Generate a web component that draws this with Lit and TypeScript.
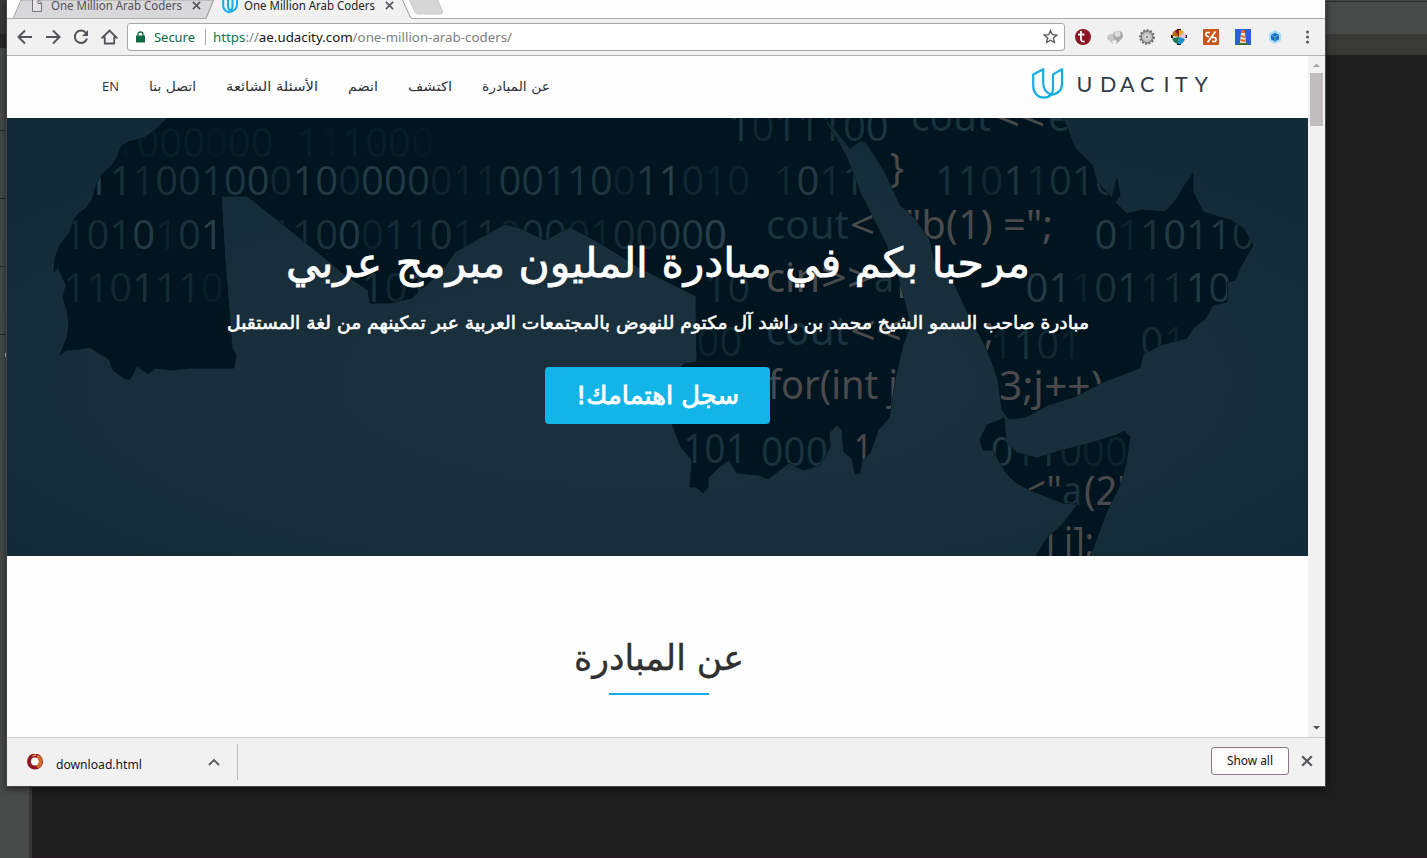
import { LitElement, html, svg, css } from "lit";
import { customElement } from "lit/decorators.js";

// A single line of text fitted to an exact advance width.
const line = (text: string, w: number, h: number, base: number, cls: string) => html`
  <svg class="line ${cls}" width=${w} height=${h} viewBox="0 0 ${w} ${h}">
    <text x=${w / 2} y=${base} text-anchor="middle" textLength=${w} lengthAdjust="spacingAndGlyphs">${text}</text>
  </svg>`;

// Binary digits: [first centre x, baseline, digits, brightness 0-9 per digit]
const PITCH = 22.88;
const ROWS: [number, number, string, string][] = [
  [125, 157, "1000000 111000", "01110110101110"],
  [98, 195, "11100100010000001100110011010", "85355567377377622266566268322"],
  [785, 195, "1011", "3735"],
  [946, 195, "11011010", "55363555"],
  [75, 249, "1010101  11000110110000100000", "34472580034572435242552244777"],
  [715, 249, "0", "5"],
  [1106, 249, "0110110", "7257665"],
  [75, 302, "1101110", "3335431"],
  [373, 302, "101", "535"],
  [716, 302, "10", "44"],
  [1037, 302, "011011110", "772563476"],
  [708, 356, "00", "23"],
  [1002, 359, "1101", "2532"],
  [1152, 356, "01", "42"],
  [740, 141, "1011100", "6355556"],
  [1002, 466, "011000", "745322"],
];

// Code fragments: [x, baseline, text, width, grey?]
const CODE: [number, number, string, number, boolean][] = [
  [911, 131, "cout", 80, false],
  [995, 131, "<<", 50, true],
  [1048, 131, "e", 22, false],
  [766, 239, "cout", 83, false],
  [850, 239, "<", 25, true],
  [766, 292, "cin", 54, true],
  [821, 292, ">>", 52, true],
  [874, 292, "a", 20, false],
  [897, 292, "[", 12, true],
  [766, 345, "cout", 83, false],
  [850, 345, "<<", 52, true],
  [890, 182, "}", 14, true],
  [905, 239, "\"b(1) =\";", 148, true],
  [768, 399, "for(int j", 130, true],
  [999, 400, "3;j++)", 104, true],
  [984, 345, ";", 10, true],
  [683, 463, "101", 64, false],
  [761, 466, "000", 67, false],
  [854, 463, "1", 18, true],
  [1024, 505, "<\"", 38, true],
  [1062, 505, "a", 20, false],
  [1084, 505, "(2'", 42, true],
  [1046, 556, "j i];", 48, true],
];

const LAND = [
  "168,118 155,130 144,138 128,142 121,147 117,158 111,167 102,174 97,183 92,200 86,208 77,215 74,220 70,232 60,245 55,258 54,272 58,267 62,276 66,285 63,298 67,310 69,325 67,338 60,355 66,350 80,349 90,347 100,354 106,357 110,361 113,370 125,379 130,379 137,366 148,374 155,368 172,370 190,368 234,368 236,355 232,348 229,310 225,260 221,196 247,196 280,222 325,258 345,275 368,290 370,303 390,303 412,298 420,290 440,273 455,252 505,224 520,228 545,240 570,227 600,243 640,268 696,296 697,362 684,364 676,372 673,395 672,424 681,447 692,460 690,487 696,487 703,493 708,487 708,478 718,468 729,460 737,473 759,475 768,479 777,472 789,463 803,470 820,465 830,447 829,433 837,425 842,430 844,452 852,458 855,474 860,473 862,460 870,453 878,430 889,418 891,407 895,380 902,348 910,325 903,295 895,268 885,242 873,218 860,192 847,158 840,145 823,118 834,128 850,148 860,141 866,142 885,172 900,205 915,218 930,240 935,262 955,285 970,318 985,345 993,365 998,380 1002,410 1009,419 1026,417 1048,405 1074,397 1103,382 1140,368 1143,355 1160,345 1187,338 1193,328 1205,319 1213,305 1227,302 1227,282 1235,280 1240,268 1253,245 1243,228 1230,220 1203,212 1193,192 1193,173 1185,185 1176,200 1165,212 1142,210 1127,214 1115,202 1120,195 1117,178 1112,198 1097,182 1092,165 1075,148 1063,118",
  "1004,418 995,422 987,425 980,440 983,450 993,450 1006,473 1015,482 1030,490 1063,503 1078,504 1062,525 1048,537 1036,556 1090,556 1098,535 1106,513 1121,483 1126,463 1130,437 1124,431 1117,435 1091,443 1056,452 1037,458 1017,453 1006,443",
];

const hero = () => html`
  <svg class="map" viewBox="7 118 1301 438" width="1301" height="438" aria-hidden="true">
    <defs>
      <radialGradient id="sea" cx=".5" cy=".6" r=".62">
        <stop offset="0" stop-color="#1a303c" /><stop offset=".6" stop-color="#182f3b" /><stop offset="1" stop-color="#132a38" />
      </radialGradient>
      <clipPath id="land">${LAND.map((p) => svg`<polygon points=${p} />`)}</clipPath>
    </defs>
    <rect x="7" y="118" width="1301" height="438" fill="url(#sea)" />
    ${LAND.map((p) => svg`<polygon points=${p} fill="#00151f" stroke="#00151f" stroke-linejoin="round" />`)}
    <g clip-path="url(#land)">
      ${ROWS.map(([x, y, t, o]) => [...t].map((c, i) => c === " " ? "" : svg`
        <text class="bit" x=${x + i * PITCH} y=${y} fill-opacity=${0.09 + Number(o[i] || 0) * 0.1}>${c}</text>`))}
      ${CODE.map(([x, y, t, w, g]) => svg`
        <text class=${g ? "code grey" : "code"} x=${x} y=${y} textLength=${w} lengthAdjust="spacingAndGlyphs">${t}</text>`)}
    </g>
  </svg>`;

const uMark = svg`
  <path d="M11.200 1.200 1.200 6.400V18C1.200 25 6 29.600 12 29.600c2.800 0 5.200-1 7.300-3C14 24.600 11.200 20.500 11.200 15Z" />
  <path d="M21 6.400 30 1.200V16c0 6-4.300 10.200-10.700 10.600 1.200-1.500 1.700-3.500 1.700-6Z" />`;

const closeIcon = (s: number) => html`<svg width=${s} height=${s} viewBox="0 0 10 10"><path class="cross" d="M1 1 9 9M9 1 1 9" /></svg>`;

@customElement("app-root")
export class AppRoot extends LitElement {
  static styles = css`
    :host { display: block; }
    * { box-sizing: border-box; }
    svg { display: block; flex: none; }
    .desktop { position: relative; width: 1427px; height: 858px; overflow: hidden; background: #1e1e1e; font-family: "Noto Sans", "Open Sans", sans-serif; }
    .backdrop { position: absolute; inset: 0; }
    .window { position: relative; margin-left: 7px; width: 1318px; height: 786px; display: flex; flex-direction: column; background: #fefefe; box-shadow: 0 0 0 1px #444, 0 2px 7px 1px rgba(0,0,0,.55); }
    .line { overflow: visible; }
    .tabs { position: relative; height: 18px; display: flex; align-items: flex-start; }
    .tabshape { position: absolute; left: 0; top: 0; }
    .tab { position: relative; display: flex; align-items: flex-start; height: 18px; }
    .first { width: 208px; padding-left: 24px; }
    .second { width: 200px; padding-left: 7px; }
    .tabtitle { font-size: 13px; fill: #55505a; }
    .first .tabtitle { margin-left: 8px; }
    .second .tabtitle { fill: #222; margin-left: 6px; }
    .x { margin: 0 0 0 10px; padding-top: 1px; }
    .cross { stroke: #59555c; stroke-width: 1.8; fill: none; }
    .toolbar { height: 38px; background: #f1f1f1; border-bottom: 1px solid #b2b1b3; display: flex; align-items: center; padding-left: 10px; }
    .nav { display: flex; gap: 12px; width: 110px; }
    .address { width: 938px; height: 28px; border: 1px solid #a9a7aa; border-radius: 3px; background: #fff; display: flex; align-items: center; padding: 0 6px 0 8px; }
    .secure { font-size: 13px; fill: #0b6a43; margin-left: 9px; }
    .divider { width: 1px; height: 16px; background: #aaa; margin: 0 7px 0 10px; }
    .url { font-size: 13px; }
    .star { margin-left: auto; }
    .extensions { display: flex; gap: 16px; margin-left: 10px; }
    .dots { margin-left: 22px; }
    .view { display: flex; height: 681px; }
    .page { width: 1301px; display: flex; flex-direction: column; background: #fefefe; }
    .header { height: 62px; display: flex; align-items: center; justify-content: space-between; padding: 0 98px 0 95px; }
    .menu { display: flex; align-items: center; gap: 30px; }
    .item { font-family: "DejaVu Sans", sans-serif; font-size: 13px; fill: #303238; direction: rtl; }
    .item.en { font-family: "Open Sans", sans-serif; font-size: 13.500px; direction: ltr; }
    .brand { display: flex; align-items: center; gap: 14px; padding-bottom: 8px; }
    .mark { fill: none; stroke: #14aee5; stroke-width: 2.2; stroke-linejoin: round; }
    .word { font-family: Lato, sans-serif; font-size: 21.500px; fill: #2e3d49; }
    .hero { height: 438px; display: grid; overflow: hidden; }
    .hero > * { grid-area: 1 / 1; }
    .bit { font-family: "Open Sans", sans-serif; font-size: 40px; text-anchor: middle; fill: #2e4550; }
    .code { font-family: "Noto Sans", sans-serif; font-size: 40px; fill: #19323e; }
    .code.grey { fill: #4a4a4c; }
    .copy { position: relative; display: flex; flex-direction: column; align-items: center; padding-top: 121px; direction: rtl; }
    .title { font-family: "DejaVu Sans", sans-serif; font-size: 41px; fill: #fff; stroke: #fff; stroke-width: .8; }
    .lead { font-family: "DejaVu Sans", sans-serif; font-size: 18px; fill: #fff; stroke: #fff; stroke-width: .6; margin-top: 15px; }
    .cta { width: 225px; height: 57px; margin-top: 28px; padding: 0; border: 0; border-radius: 4px; background: #12b5e8; display: flex; align-items: center; justify-content: center; }
    .ctatext { font-family: "DejaVu Sans", sans-serif; font-size: 25px; fill: #fff; stroke: #fff; stroke-width: .8; }
    .about { height: 181px; display: flex; flex-direction: column; align-items: center; padding: 76px 0 0 2px; direction: rtl; }
    .heading { font-family: "DejaVu Sans", sans-serif; font-size: 35px; fill: #303030; stroke: #303030; stroke-width: .4; }
    .rule { width: 100px; height: 2px; background: #12aee6; margin-top: 11px; }
    .scroll { width: 17px; background: #f1f1f1; display: flex; flex-direction: column; align-items: center; }
    .thumb { width: 13px; height: 53px; margin-bottom: auto; background: #c1bdbe; }
    .shelf { height: 49px; background: #f1f1f1; border-top: 1px solid #cfcdcf; display: flex; align-items: center; padding-left: 20px; }
    .file { font-size: 13px; fill: #15151f; margin: 4px 0 0 13px; }
    .chev { margin-left: 66px; }
    .sep { width: 1px; height: 36px; background: #bbb; margin-left: 17px; }
    .all { margin: 0 0 2px auto; width: 78px; height: 28px; border: 1px solid #897887; border-radius: 3px; background: #fcfcfa; display: flex; align-items: center; justify-content: center; padding: 0; }
    .alltext { font-family: "Noto Sans", sans-serif; font-size: 12px; fill: #111; }
    .shut { margin: 0 12px 2px 12px; }
  `;

  render() {
    return html`
      <div class="desktop">
        <svg class="backdrop" width="1427" height="858">
          <path fill="#484a49" d="M0 0h7v858H0ZM1325 0h102v34h-102Z" />
          <path fill="#484a49" d="M0 786h29v72H0Z" /><path fill="#373737" d="M29 786h3v72h-3Z" />
          <path fill="#393938" d="M1325 34h102v21h-102ZM0 0h7v34H0Z" />
          <path fill="#292929" d="M1325 1h102v1h-102ZM0 34h7v14H0ZM0 130h6v1H0ZM0 198h6v1H0ZM0 266h6v1H0ZM0 334h6v1H0Z" />
          <path fill="#b6b6b6" d="M6 145h1v2h-1ZM6 182h1v2h-1ZM6 212h1v10h-1ZM6 240h1v9h-1ZM6 286h1v2h-1ZM6 307h1v13h-1ZM5 353h2v4H5Z" />
          <path fill="#241c22" d="M32 855h1395v3H32Z" />
        </svg>
        <div class="window">
          <div class="tabs">
            <svg class="tabshape" width="1318" height="19">
              <path d="M0 18.500H6L14 0H207L199 18.500Z" fill="#d8d7d9" stroke="#a5a3a7" />
              <path d="M0 18.500H199L207 -1H395L404 18.500H1318" fill="none" stroke="#aaa8ab" />
              <path d="M199.500 19 207.500 -1H395L404 19Z" fill="#f1f1f1" />
              <path d="M199 18.500 207 -1M395 -1 404 18.500" stroke="#a5a3a7" fill="none" />
              <path d="M402 -1H430L435.500 11Q436 14 433 14H412Q409 14 408 12Z" fill="#d6d6d6" stroke="#c8c7c8" />
            </svg>
            <div class="tab first">
              <svg width="12" height="13"><path d="M1.500 0V11.500H10.500V3L7.500 0M7 0V3.500H10.500" fill="#e4e2e5" stroke="#77727b" /></svg>
              ${line("One Million Arab Coders", 131, 16, 9.5, "tabtitle")}
              <div class="x">${closeIcon(9)}</div>
            </div>
            <div class="tab second">
              <svg width="16" height="14" viewBox="0 0 16 14"><path d="M1.200 0V6.500Q2 11 7 12.200Q14.500 11 15 5V0M6 0V6Q6 9.500 9 11M10.500 0V7Q10 10 8.500 12" fill="none" stroke="#14aee5" stroke-width="2" /></svg>
              ${line("One Million Arab Coders", 131, 16, 9.5, "tabtitle")}
              <div class="x">${closeIcon(9)}</div>
            </div>
          </div>
          <div class="toolbar">
            <div class="nav">
              <svg width="16" height="16" fill="none" stroke="#56545a" stroke-width="2"><path d="M15 8H2M8 1.500 1.500 8 8 14.500" /></svg>
              <svg width="16" height="16" fill="none" stroke="#56545a" stroke-width="2"><path d="M1 8H14M8 1.500 14.500 8 8 14.500" /></svg>
              <svg width="16" height="16" fill="none" stroke="#56545a" stroke-width="2"><path d="M13 4A6.200 6.200 0 1 0 14 9.500" /><path d="M15 1V7H9Z" fill="#56545a" stroke="none" /></svg>
              <svg width="17" height="16" fill="none" stroke="#56545a" stroke-width="1.800"><path d="M1.500 8.500 8.500 1.500 15.500 8.500H13.200V14.500H3.800V8.500Z" /></svg>
            </div>
            <div class="address">
              <svg width="9" height="12"><path d="M0 4.500H9V11.500H0Z" fill="#0b6a43" /><path d="M2 5V3Q2 1 4.500 1T7 3V5" fill="none" stroke="#0b6a43" stroke-width="1.300" /></svg>
              ${line("Secure", 41, 18, 13.5, "secure")}
              <span class="divider"></span>
              <svg class="line url" width="299" height="18"><text y="13.500" textLength="299" lengthAdjust="spacingAndGlyphs" fill="#7b8085"><tspan fill="#0b7a50">https</tspan>://<tspan fill="#151515">ae.udacity.com</tspan>/one-million-arab-coders/</text></svg>
              <svg class="star" width="15" height="15"><path d="m7.500 1.500 1.800 4.200 4.500.4-3.400 3 1 4.400-3.900-2.300-3.900 2.300 1-4.400-3.400-3 4.500-.4Z" fill="none" stroke="#56545a" stroke-width="1.300" /></svg>
            </div>
            <div class="extensions">
              <svg width="16" height="16"><circle cx="8" cy="8" r="8" fill="#8b1522" /><path d="M6 2V10Q6 13 9.500 12.500M3 5.500H9.500" fill="none" stroke="#fff" stroke-width="1.800" /></svg>
              <svg width="16" height="16"><ellipse cx="5" cy="8.500" rx="5" ry="3.500" fill="#c8c8c8" /><path d="M6 5Q8 1 13 2Q17 4 15.500 9L9 15.500Q11 11 7 10Z" fill="#aaa" /><circle cx="10.500" cy="5" r="3" fill="#dcdcdc" /><path d="m3 12 3 2" stroke="#aaa" /></svg>
              <svg width="16" height="16"><circle cx="8" cy="8" r="6.800" fill="#b3b1b2" stroke="#6a6a6a" stroke-width="2" stroke-dasharray="2 1.500" /><circle cx="8" cy="8" r="5.500" fill="#c4c4c4" stroke="#777" /><circle cx="8" cy="8" r="2" fill="#888" stroke="#eee" /></svg>
              <svg width="16" height="16"><path d="M6 0h4v2H6ZM6 14h4v2H6ZM0 6h2v3H0ZM14 6h2v3h-2Z" fill="#111" /><path d="M8 8V.500L2 2.500 1 7Z" fill="#b76a13" /><path d="M8 8 4 1.500Q6 0 8 1Z" fill="#8b1717" /><path d="M8 8V1Q13 1 13 4Z" fill="#e3ab1f" /><path d="M8 8 13 3Q17 8 13 10Z" fill="#e6c0e4" /><path d="M8 8 14 10Q12 16 7 15Z" fill="#158fd8" /><path d="M8 8 7 15Q1 13 1.500 9Z" fill="#17784f" /></svg>
              <svg width="16" height="16"><rect width="16" height="16" rx="1" fill="#c7561b" /><path d="M7 3.500H4Q1.500 5 4 7L6 8M12.500 2.500 4.500 13.500M9 8.500H12Q14.500 10.500 12 12.500H9" fill="none" stroke="#fff" stroke-width="1.700" /></svg>
              <svg width="16" height="16"><path fill="#2c5fe0" d="M0 0h16v16H0Z" /><path fill="#f1e1c2" d="M6 4h4l1 10H5Z" /><path fill="#e46b22" d="M6 1h4v3H6ZM6 6l4 1v2L6 8ZM5.500 10l5 1v2l-5-1Z" /><path fill="#37722e" d="M3 14h10v2H3Z" /></svg>
              <svg width="16" height="16"><path d="m8 1 6 3.500v7L8 15l-6-3.500v-7Z" fill="#a8dcf5" /><path d="m8 3.700 4 2.200v4.300L8 12.500l-4-2.300V5.900Z" fill="#1b70bd" /><path d="M4.500 6.200 8 8l3.500-1.800M8 8v4" stroke="#75b9e8" fill="none" stroke-width=".7" /></svg>
            </div>
            <svg class="dots" width="4" height="16" fill="#59555b"><circle cx="2.500" cy="3" r="1.500" /><circle cx="2.500" cy="8" r="1.500" /><circle cx="2.500" cy="13" r="1.500" /></svg>
          </div>
          <div class="view">
            <div class="page">
              <div class="header">
                <div class="menu">
                  ${line("EN", 17, 24, 16, "item en")}
                  ${line("اتصل بنا", 47, 24, 16, "item")}
                  ${line("الأسئلة الشائعة", 92, 24, 16, "item")}
                  ${line("انضم", 30, 24, 16, "item")}
                  ${line("اكتشف", 44, 24, 16, "item")}
                  ${line("عن المبادرة", 68, 24, 16, "item")}
                </div>
                <div class="brand">
                  <svg class="mark" width="32" height="31" viewBox="0 0 32 31">${uMark}</svg>
                  <svg class="line word" width="132" height="24"><text x="-1.500 22 42 62 85.500 97 116.500" y="21">UDACITY</text></svg>
                </div>
              </div>
              <div class="hero">
                ${hero()}
                <div class="copy">
                  ${line("مرحبا بكم في مبادرة المليون مبرمج عربي", 744, 55, 38, "title")}
                  ${line("مبادرة صاحب السمو الشيخ محمد بن راشد آل مكتوم للنهوض بالمجتمعات العربية عبر تمكينهم من لغة المستقبل", 862, 30, 20, "lead")}
                  <button class="cta">${line("سجل اهتمامك!", 163, 40, 28, "ctatext")}</button>
                </div>
              </div>
              <div class="about">
                ${line("عن المبادرة", 170, 50, 38, "heading")}
                <span class="rule"></span>
              </div>
            </div>
            <div class="scroll">
              <svg width="17" height="17"><path d="M5 11 8.500 7.500 12 11Z" fill="#a5a3a5" /></svg>
              <span class="thumb"></span>
              <svg width="17" height="17"><path d="M5 6 8.500 9.500 12 6Z" fill="#505050" /></svg>
            </div>
          </div>
          <div class="shelf">
            <svg width="16" height="16"><circle cx="8" cy="7.500" r="6" fill="#fff" stroke="#8f1a22" stroke-width="4" /><path d="M10 2A6 6 0 0 1 10 13" fill="none" stroke="#d16b2a" stroke-width="3.500" /><path d="M5.500 2 9 1" stroke="#e0935c" stroke-width="1.500" /></svg>
            ${line("download.html", 86, 18, 13.5, "file")}
            <svg class="chev" width="12" height="8"><path d="m1 7 5-5 5 5" stroke="#59555c" stroke-width="1.800" fill="none" /></svg>
            <span class="sep"></span>
            <button class="all">${line("Show all", 46, 18, 13, "alltext")}</button>
            <div class="shut">${closeIcon(12)}</div>
          </div>
        </div>
      </div>`;
  }
}
